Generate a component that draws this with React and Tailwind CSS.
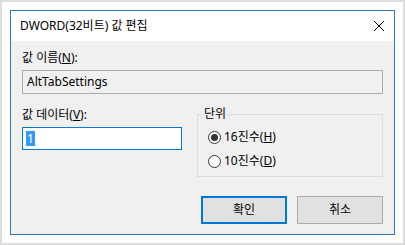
export default function App() {
  const font = { fontFamily: '"Noto Sans", "Noto Sans CJK KR", sans-serif' };
  return (
    <div className="w-[405px] h-[245px] bg-white border-2 border-[#dcdcdc] pl-[8px] pt-[8px]" style={font}>
      <div className="w-[385px] h-[225px] border border-[#2f7bbf] flex flex-col bg-[#f0f0f0]">
        <div className="h-[30px] bg-white flex items-center justify-between pl-[9px] pr-[9px]">
          <span className="text-[12px] text-black leading-none">DWORD(32비트) 값 편집</span>
          <svg width="12" height="12" viewBox="0 0 12 12">
            <path d="M1 1 L11 11 M11 1 L1 11" stroke="#000" strokeWidth="1" />
          </svg>
        </div>
        <div className="flex-1 px-[11px] pt-[10px] text-[12px] text-black">
          <div className="leading-[14px]">값 이름(<u>N</u>):</div>
          <div className="mt-[5px] h-[24px] border border-[#adadad] bg-[#f0f0f0] flex items-center px-[4px]">AltTabSettings</div>
          <div className="flex mt-[12px] gap-[15px]">
            <div className="w-[160px]">
              <div className="leading-[14px] mt-[2px]">값 데이터(<u>V</u>):</div>
              <div className="mt-[5px] h-[23px] border border-[#0078d7] bg-white flex items-center px-[3px]">
                <span className="bg-[#3399ff] text-white px-[1px] leading-[15px]">1</span>
              </div>
            </div>
            <div className="flex-1 relative mt-[8px]">
              <div className="border border-[#dcdcdc] h-[63px] flex flex-col gap-[10px] pl-[10px] pt-[15px]">
                <div className="flex items-center gap-[3px] leading-[14px]">
                  <span className="w-[13px] h-[13px] rounded-full border border-[#333] flex items-center justify-center bg-white">
                    <span className="w-[7px] h-[7px] rounded-full bg-[#333]" />
                  </span>
                  <span>16진수(<u>H</u>)</span>
                </div>
                <div className="flex items-center gap-[3px] leading-[14px]">
                  <span className="w-[13px] h-[13px] rounded-full border border-[#333] bg-white" />
                  <span>10진수(<u>D</u>)</span>
                </div>
              </div>
              <span className="absolute left-[6px] -top-[7px] bg-[#f0f0f0] px-[1px] leading-[14px]">단위</span>
            </div>
          </div>
          <div className="flex justify-end gap-[10px] mt-[19px]">
            <button className="w-[86px] h-[28px] border-2 border-[#0078d7] bg-[#e1e1e1] text-[12px]">확인</button>
            <button className="w-[86px] h-[28px] border border-[#adadad] bg-[#e1e1e1] text-[12px]">취소</button>
          </div>
        </div>
      </div>
    </div>
  );
}
